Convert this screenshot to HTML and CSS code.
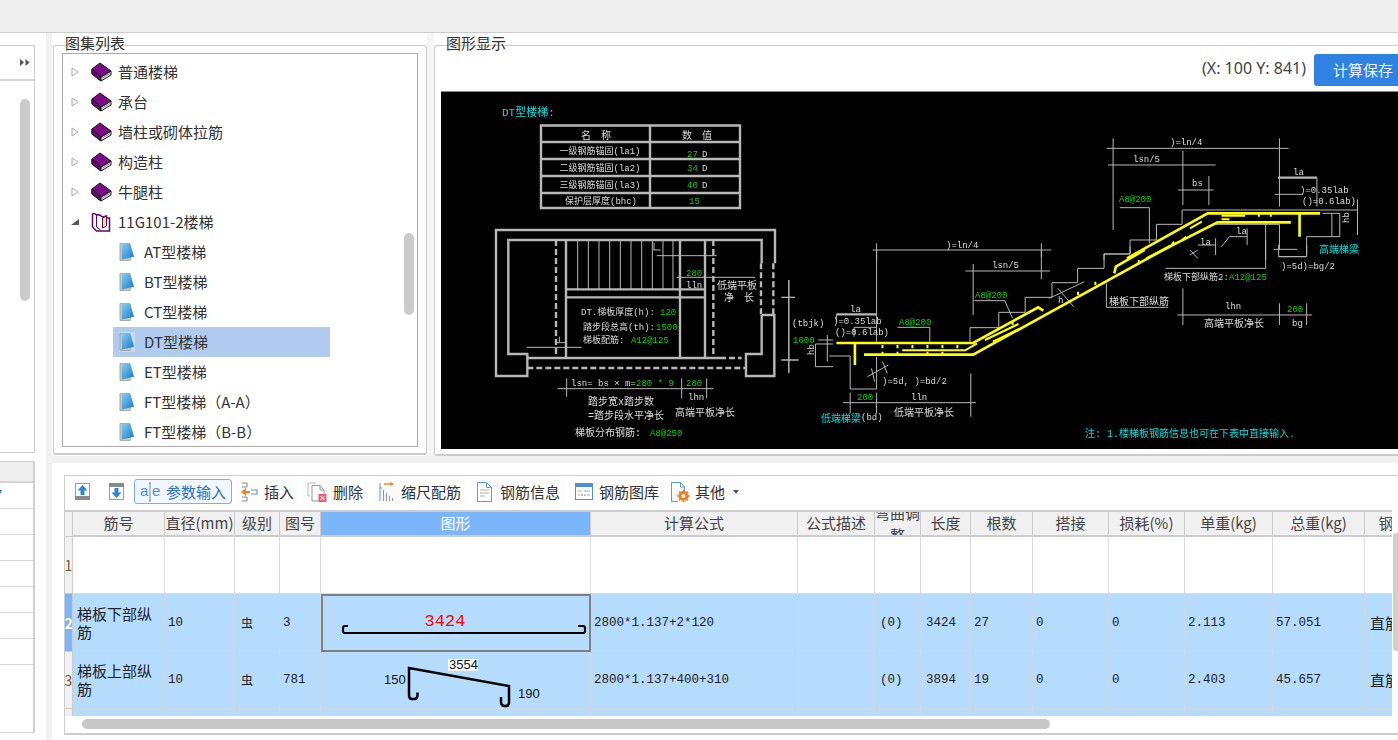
FILE: index.html
```html
<!DOCTYPE html>
<html lang="zh-CN">
<head>
<meta charset="utf-8">
<title>图集列表</title>
<link rel="stylesheet" href="styles.css">
</head>
<body>
<svg class="sprite" aria-hidden="true">
  <defs>
    <linearGradient id="docblue" x1="0" y1="0" x2="1" y2="1">
      <stop offset="0" stop-color="#86cdf0"/>
      <stop offset="1" stop-color="#1479cc"/>
    </linearGradient>
    <symbol id="i-closed" viewBox="0 0 21 20">
      <path d="M1 7V12L10 19L20 13V9L10 15Z" fill="#eee" stroke="#111"/>
      <path d="M1 7V12L10 19V15Z" fill="#6d0a78" stroke="#111"/>
      <path d="M1 7L9 1L20 9L10 15Z" fill="#7d0a86" stroke="#111"/>
      <path d="M11.500 16L19 11.500" stroke="#888" fill="none"/>
    </symbol>
    <symbol id="i-open" viewBox="0 0 20 20">
      <path d="M5 3C3 1 2 1 1 2V15L5 19H18V6H15V4L11 5C9 3 7 2 5 3Z" fill="#fff" stroke="#5a0a66" stroke-width="1.500"/>
      <path d="M11 6V16L15 14V4Z" fill="#f4e36a" stroke="#5a0a66"/>
      <path d="M5 3V15L9 18" fill="none" stroke="#5a0a66"/>
    </symbol>
    <symbol id="i-doc" viewBox="0 0 17 20">
      <path d="M1 1H11L12 6V19L1 19Z" fill="#c9c9bd" stroke="#8f8f80" stroke-width=".7"/>
      <path d="M3 1H12L16 15L3 18Z" fill="url(#docblue)"/>
    </symbol>
    <symbol id="i-up" viewBox="0 0 15 17">
      <rect x=".5" y=".5" width="14" height="16" fill="#fff" stroke="#999"/>
      <rect y="13" width="15" height="4" fill="#8a8a8a"/>
      <path d="M7.500 2L12.500 7.500H9.500V12H5.500V7.500H2.500Z" fill="#2c86d6"/>
    </symbol>
    <symbol id="i-down" viewBox="0 0 15 17">
      <rect x=".5" y=".5" width="14" height="16" fill="#fff" stroke="#999"/>
      <rect width="15" height="4" fill="#8a8a8a"/>
      <path d="M7.500 15L12.500 9.500H9.500V5H5.500V9.500H2.500Z" fill="#2c86d6"/>
    </symbol>
    <symbol id="i-insert" viewBox="0 0 17 20">
      <path d="M1 1H6V5H1M1 15H6V19H1" fill="none" stroke="#888"/>
      <path d="M10 8H16V12H10" fill="none" stroke="#5a9ad8" stroke-width="1.200"/>
      <path d="M0 10L5 6V9H9V11H5V14Z" fill="#f0851e"/>
    </symbol>
    <symbol id="i-del" viewBox="0 0 20 20">
      <path d="M5 3.500H13L17 8V12M12 19H5V3.500" fill="none" stroke="#999"/>
      <path d="M1 1H9M1 1V14H3" fill="none" stroke="#bbb"/>
      <path d="M13 3.500V8H17" fill="none" stroke="#999"/>
      <rect x="11.500" y="12" width="8" height="8" fill="#e8636b"/>
      <path d="M13.500 14L17.500 18M17.500 14L13.500 18" stroke="#fff"/>
    </symbol>
    <symbol id="i-scale" viewBox="0 0 16 20">
      <path d="M5 2H14" stroke="#f08a2c" stroke-width="1.500"/>
      <path d="M11 0L15 2L11 4Z" fill="#f08a2c"/>
      <path d="M1 1V19M1 6H3" stroke="#5a9ad8"/>
      <path d="M4.500 8V19M7.500 11V19M10.500 14V19M13.500 16V19" stroke="#999" stroke-width="1.200"/>
    </symbol>
    <symbol id="i-info" viewBox="0 0 15 20">
      <path d="M.5 .5H9.500L14.500 5.500V19.500H.5Z" fill="#fff" stroke="#5a9ad8"/>
      <path d="M9.500 .5V5.500H14.500" fill="none" stroke="#5a9ad8"/>
      <path d="M3 8H12M3 11H12M3 14H8" stroke="#aaa"/>
    </symbol>
    <symbol id="i-lib" viewBox="0 0 18 18">
      <rect x=".5" y=".5" width="17" height="16" fill="#fff" stroke="#4f8fd4"/>
      <rect width="18" height="4" fill="#4f8fd4"/>
      <path d="M3 8H7M9 8H15" stroke="#aaa"/>
      <path d="M3 12H5" stroke="#e0a030"/>
      <path d="M6 12H8" stroke="#d05050"/>
      <path d="M9 12H11" stroke="#5ab05a"/>
      <path d="M12 12H15" stroke="#aaa"/>
    </symbol>
    <symbol id="i-other" viewBox="0 0 19 20">
      <path d="M.5 .5H9.500L13.500 5V12M7 19.500H.5V.5" fill="#fff" stroke="#5a9ad8"/>
      <path d="M9.500 .5V5H13.500" fill="none" stroke="#5a9ad8"/>
      <circle cx="12.500" cy="14" r="3.500" fill="none" stroke="#f0801e" stroke-width="3"/>
      <path d="M12.500 7.500V20.500M6 14H19M8 9.500L17 18.500M17 9.500L8 18.500" stroke="#f0801e" stroke-width="1.600" stroke-dasharray="2 9"/>
    </symbol>
    <symbol id="i-tri" viewBox="0 0 8 10">
      <path d="M1 1L7 5L1 9Z" fill="#fff" stroke="#a8a8a8"/>
    </symbol>
    <symbol id="i-tri-open" viewBox="0 0 8 10">
      <path d="M0 8L8 2V8Z" fill="#555"/>
    </symbol>
    <symbol id="i-more" viewBox="0 0 10 7">
      <path d="M0 0L4 3.500L0 7ZM5.500 0L9.500 3.500L5.500 7Z" fill="#555"/>
    </symbol>
  </defs>
</svg>

<header class="topbar"></header>

<div class="main">
  <aside class="left">
    <div class="left-top">
      <div class="left-head"><svg class="more"><use href="#i-more"/></svg></div>
      <div class="left-scroll-track"><div class="left-thumb"></div></div>
    </div>
    <div class="left-table">
      <div class="left-th"></div>
      <div class="left-tr"><span class="cut">7</span></div>
      <div class="left-tr"></div>
      <div class="left-tr"></div>
      <div class="left-tr"></div>
      <div class="left-tr"></div>
      <div class="left-tr"></div>
      <div class="left-tr"></div>
    </div>
  </aside>

  <div class="right">
    <div class="upper">
      <section class="pane pane-tree">
        <div class="box box-tree">
          <span class="legend">图集列表</span>
          <div class="tree">
            <div class="node"><svg class="tri"><use href="#i-tri"/></svg><svg class="book"><use href="#i-closed"/></svg><span>普通楼梯</span></div>
            <div class="node"><svg class="tri"><use href="#i-tri"/></svg><svg class="book"><use href="#i-closed"/></svg><span>承台</span></div>
            <div class="node"><svg class="tri"><use href="#i-tri"/></svg><svg class="book"><use href="#i-closed"/></svg><span>墙柱或砌体拉筋</span></div>
            <div class="node"><svg class="tri"><use href="#i-tri"/></svg><svg class="book"><use href="#i-closed"/></svg><span>构造柱</span></div>
            <div class="node"><svg class="tri"><use href="#i-tri"/></svg><svg class="book"><use href="#i-closed"/></svg><span>牛腿柱</span></div>
            <div class="node"><svg class="tri"><use href="#i-tri-open"/></svg><svg class="book"><use href="#i-open"/></svg><span>11G101-2楼梯</span></div>
            <div class="leaf"><svg class="doc"><use href="#i-doc"/></svg><span>AT型楼梯</span></div>
            <div class="leaf"><svg class="doc"><use href="#i-doc"/></svg><span>BT型楼梯</span></div>
            <div class="leaf"><svg class="doc"><use href="#i-doc"/></svg><span>CT型楼梯</span></div>
            <div class="leaf selected"><svg class="doc"><use href="#i-doc"/></svg><span>DT型楼梯</span></div>
            <div class="leaf"><svg class="doc"><use href="#i-doc"/></svg><span>ET型楼梯</span></div>
            <div class="leaf"><svg class="doc"><use href="#i-doc"/></svg><span>FT型楼梯（A-A）</span></div>
            <div class="leaf"><svg class="doc"><use href="#i-doc"/></svg><span>FT型楼梯（B-B）</span></div>
          </div>
          <div class="tree-thumb"></div>
        </div>
      </section>

      <section class="pane pane-view">
        <div class="box box-view">
          <span class="legend">图形显示</span>
          <div class="view-head">
            <span class="coords">(X: 100 Y: 841)</span>
            <button class="save">计算保存</button>
          </div>
          <div class="canvas">
            <svg class="cad" viewBox="441 92 957 358" width="957" height="358">
              <!-- parameter table -->
              <path class="lw2" d="M541 125.500H740V208H541ZM541 142H740M541 159H740M541 176H740M541 193H740M650 125.500V208"/>
              <!-- plan view, coordinates in 3x -->
              <g transform="translate(440 220) scale(.33333)">
                <path class="lw2" d="M1005 130V30H168V468H262V402H205V60H965V130M965 285H1003V468H918V402H965V285"/>
                <path class="lw2 dash" d="M963 130V285M1000 130V285"/>
                <path class="lw2" d="M262 414H840M378 60V414M795 60V414M720 60V414M378 208H795M378 232H795"/>
                <path class="lw2 dash" d="M840 414H905M262 444H915M348 60V414M820 60V414"/>
                <path class="lw1" d="M413 60V208M445 60V208M477 60V208M509 60V208M541 60V208M573 60V208M605 60V208M637 60V208M669 60V208M699 60V208"/>
                <path class="lw1" d="M640 90H662M642 68V90M650 107H830M710 172H945M260 382H425M350 368H375M358 350V368"/>
                <path class="lw1" d="M352 506H820M380 475V530M725 475V535M800 475V535"/>
                <path class="lw1" d="M1047 180V460M1025 232H1065M1025 420H1075"/>
              </g>
              <!-- section, upper part, coordinates read from crop -->
              <g transform="translate(780 40) scale(.3942 .33333)">
                <path class="lw1" d="M828 325H1290M845 295V570M1267 295V500M832 375H1105M1022 332V495M1010 450H1100M1088 408V495"/>
                <path class="lw2" d="M1263 413H1362"/>
                <path class="lw1" d="M1362 413V500M1255 463H1325"/>
                <path class="lw1" d="M888 640V600H955V553H1020V510H1465M1465 478V585M822 660V642H888"/>
                <path class="lw1" d="M862 503H937V610M1105 553H1267V628M1232 553V660"/>
                <path class="lw1" d="M1376 520H1420V590H1336V645M1400 520V590M1252 628H1312M1265 650H1335M1120 620L1140 590H1185M1185 565V615M1040 630L1060 655M1060 615H1105M1105 595V645"/>
                <path class="lw1" d="M235 630H688M245 610V660M663 610V650"/>
                <path class="yl" d="M1370 520H1085L880 655M1296 547H1110L930 655M1318 522V590"/>
                <path class="yl yl-thin" d="M1120 527H1180M1215 520V530M1245 520V530M1120 538H1140M1070 545L1040 565M1000 605L990 620M1030 590L1020 600"/>
              </g>
              <!-- section, lower part -->
              <g transform="translate(780 250) scale(.3942 .33333)">
                <path class="lw1" d="M245 0V275M663 0V88M470 63H685M490 42V195"/>
                <path class="lw1" d="M482 275V233H555V187H622V142H690V98H755V55H822V12H888V-10"/>
                <path class="lw1" d="M493 152H570L590 205M298 232H380V275"/>
                <path class="lw2" d="M143 193H245"/>
                <path class="lw1" d="M143 193V215M188 232H245M188 232V260M22 90V368M3 142H38M3 330H48"/>
                <path class="lw1" d="M97 270H135M90 282H135M90 282V350H135M120 255V335M125 318H178V417H245V320"/>
                <path class="lw1" d="M222 380L275 345M232 355L240 395M260 335L272 370M160 458H497M178 428V490M245 428V490M484 370V500"/>
                <path class="lw1" d="M683 145L772 95M705 115L745 170M828 100V172H985M978 55H1232V-30M1008 195H1350M1022 115V225M1267 160V225M1336 160V225"/>
                <path class="lw1" d="M1265 -15V20H1336V-15M1040 15L1060 0"/>
                <path class="yl" d="M143 279H490L655 172L668 182M190 279V345M213 314H490L990 -12M848 70L852 50L925 0"/>
                <path class="yl yl-thin" d="M310 301H470L500 280M520 270L605 222M540 275L610 235"/>
                <path class="yl yl-thin" d="M260 285V295M298 285V295M336 285V295M374 285V295M412 285V295M450 285V295M260 305V314M298 305V314M374 305V314M412 305V314M590 215V225M800 95V105M756 125V135M910 30V40"/>
              </g>
              <!-- labels -->
              <text class="t c big" x="502" y="116">DT型楼梯:</text>
              <text class="t mid" x="596" y="139" text-anchor="middle">名　称</text>
              <text class="t mid" x="697" y="139" text-anchor="middle">数　值</text>
              <text class="t" x="600" y="154" text-anchor="middle">一级钢筋锚固(la1)</text>
              <text class="t" x="600" y="171" text-anchor="middle">二级钢筋锚固(la2)</text>
              <text class="t" x="600" y="188" text-anchor="middle">三级钢筋锚固(la3)</text>
              <text class="t" x="601" y="204" text-anchor="middle">保护层厚度(bhc)</text>
              <text class="t g" x="687" y="157">27</text><text class="t" x="702" y="157">D</text>
              <text class="t g" x="687" y="171">34</text><text class="t" x="702" y="171">D</text>
              <text class="t g" x="687" y="188">40</text><text class="t" x="702" y="188">D</text>
              <text class="t g" x="689" y="204">15</text>

              <text class="t g" x="686" y="276">280</text>
              <text class="t" x="686" y="288">lln</text>
              <text class="t mid" x="717" y="289">低端平板</text>
              <text class="t mid" x="724" y="301">净　长</text>
              <text class="t" x="581" y="315">DT.梯板厚度(h):</text><text class="t g" x="660" y="315">120</text>
              <text class="t" x="583" y="330">踏步段总高(th):</text><text class="t g" x="656" y="330">1500</text>
              <text class="t" x="583" y="343">梯板配筋:</text><text class="t g" x="631" y="343">A12@125</text>
              <text class="t" x="571" y="386">lsn= bs × m=</text><text class="t g" x="636" y="386">280 * 9</text>
              <text class="t g" x="686" y="386">280</text>
              <text class="t" x="688" y="400">lhn</text>
              <text class="t mid" x="588" y="405">踏步宽x踏步数</text>
              <text class="t mid" x="588" y="419">=踏步段水平净长</text>
              <text class="t mid" x="675" y="416">高端平板净长</text>
              <text class="t mid" x="575" y="436">梯板分布钢筋:</text>
              <text class="t g" x="650" y="436">A8@250</text>
              <text class="t" x="792" y="326">(tbjk)</text>
              <text class="t g" x="793" y="343">1600</text>
              <text class="t" x="811" y="358" transform="rotate(-90 811 355)">hb</text>

              <text class="t" x="946" y="248">)=ln/4</text>
              <text class="t" x="992" y="268">lsn/5</text>
              <text class="t g" x="975" y="298">A8@200</text>
              <text class="t g" x="899" y="325">A8@200</text>
              <text class="t" x="850" y="312">la</text>
              <text class="t" x="833" y="324">)=0.35lab</text>
              <text class="t" x="835" y="335">()=0.6lab)</text>
              <text class="t" x="882" y="384">)=5d, )=bd/2</text>
              <text class="t g" x="857" y="400">200</text>
              <text class="t" x="911" y="400">lln</text>
              <text class="t c mid" x="821" y="422">低端梯梁</text>
              <text class="t" x="861" y="420">(bd)</text>
              <text class="t mid" x="894" y="416">低端平板净长</text>
              <text class="t" x="1058" y="303">h</text>
              <text class="t mid" x="1109" y="305">梯板下部纵筋</text>
              <text class="t" x="1164" y="280">梯板下部纵筋2:</text>
              <text class="t g" x="1229" y="280">A12@125</text>
              <text class="t" x="1281" y="269">)=5d)=bg/2</text>
              <text class="t" x="1225" y="309">lhn</text>
              <text class="t g" x="1287" y="312">200</text>
              <text class="t mid" x="1204" y="327">高端平板净长</text>
              <text class="t" x="1292" y="326">bg</text>
              <text class="t c mid" x="1085" y="437">注: 1.楼梯板钢筋信息也可在下表中直接输入.</text>

              <text class="t" x="1170" y="145">)=ln/4</text>
              <text class="t" x="1133" y="162">lsn/5</text>
              <text class="t" x="1192" y="186">bs</text>
              <text class="t" x="1293" y="175">la</text>
              <text class="t" x="1300" y="193">)=0.35lab</text>
              <text class="t" x="1302" y="204">()=0.6lab)</text>
              <text class="t g" x="1119" y="202">A8@200</text>
              <text class="t c mid" x="1319" y="253">高端梯梁</text>
              <text class="t" x="1236" y="234">la</text>
              <text class="t" x="1200" y="245">la</text>
              <text class="t" x="1346" y="226" transform="rotate(-90 1346 223)">hb</text>
            </svg>
          </div>
        </div>
      </section>
    </div>

    <div class="lower">
      <section class="grid-panel">
        <div class="toolbar">
          <span class="tb"><svg class="ic15"><use href="#i-up"/></svg></span>
          <span class="tb tb-down"><svg class="ic15"><use href="#i-down"/></svg></span>
          <span class="tb tb-active">
            <svg class="ic20" viewBox="0 0 20 20"><text class="ae" x="0" y="14">a</text><text class="ae" x="12" y="14">e</text><path d="M9 1H11M10 1V19M9 19H11" stroke="#888" fill="none"/></svg>
            <span>参数输入</span>
          </span>
          <span class="tb tb-insert"><svg class="ic17"><use href="#i-insert"/></svg><span>插入</span></span>
          <span class="tb tb-del"><svg class="ic20"><use href="#i-del"/></svg><span>删除</span></span>
          <span class="tb tb-plus"><svg class="ic16"><use href="#i-scale"/></svg><span>缩尺配筋</span></span>
          <span class="tb tb-plus"><svg class="ic15b"><use href="#i-info"/></svg><span>钢筋信息</span></span>
          <span class="tb"><svg class="ic18"><use href="#i-lib"/></svg><span>钢筋图库</span></span>
          <span class="tb tb-other"><svg class="ic19"><use href="#i-other"/></svg><span>其他</span><span class="caret"></span></span>
        </div>

        <div class="table-wrap">
          <div class="row head">
            <div class="rh"></div>
            <div class="c">筋号</div><div class="c">直径(mm)</div><div class="c">级别</div><div class="c">图号</div>
            <div class="c active">图形</div>
            <div class="c">计算公式</div><div class="c">公式描述</div><div class="c wrap">弯曲调整</div>
            <div class="c">长度</div><div class="c">根数</div><div class="c">搭接</div><div class="c">损耗(%)</div>
            <div class="c">单重(kg)</div><div class="c">总重(kg)</div><div class="c">钢筋归类</div>
          </div>
          <div class="row r57">
            <div class="rh">1</div>
            <div class="c"></div><div class="c"></div><div class="c"></div><div class="c"></div><div class="c"></div><div class="c"></div><div class="c"></div><div class="c"></div><div class="c"></div><div class="c"></div><div class="c"></div><div class="c"></div><div class="c"></div><div class="c"></div><div class="c"></div>
          </div>
          <div class="row r58 sel">
            <div class="rh on">2</div>
            <div class="c name">梯板下部纵筋</div><div class="c n">10</div><div class="c grade">虫</div><div class="c n">3</div>
            <div class="c shape focus">
              <svg class="bar" viewBox="0 0 268 54" width="268" height="54">
                <path d="M25 30H22Q20 30 20 32V35Q20 37 22 37H260Q262 37 262 35V32Q262 30 260 30H255" fill="none" stroke="#000" stroke-width="2.200"/>
                <text class="len" x="122" y="30" text-anchor="middle">3424</text>
              </svg>
            </div>
            <div class="c n">2800*1.137+2*120</div><div class="c"></div>
            <div class="c n wide">(0)</div><div class="c n wide">3424</div><div class="c n">27</div><div class="c n">0</div><div class="c n">0</div>
            <div class="c n">2.113</div><div class="c n">57.051</div><div class="c txt">直筋</div>
          </div>
          <div class="row r57 sel">
            <div class="rh">3</div>
            <div class="c name">梯板上部纵筋</div><div class="c n">10</div><div class="c grade">虫</div><div class="c n">781</div>
            <div class="c shape">
              <svg class="bar" viewBox="0 0 270 57" width="270" height="57">
                <path d="M96.500 40.500V43Q96.500 47 93 47H91Q88 47 88 43V16L188 34V51Q188 54 184 54Q180 54 180 50V45" fill="none" stroke="#000" stroke-width="2.500"/>
                <rect class="lbl-bg" x="127" y="7" width="30" height="12"/>
                <text class="dim" x="128" y="17">3554</text>
                <text class="dim" x="63" y="32">150</text>
                <text class="dim" x="197" y="46">190</text>
              </svg>
            </div>
            <div class="c n">2800*1.137+400+310</div><div class="c"></div>
            <div class="c n wide">(0)</div><div class="c n wide">3894</div><div class="c n">19</div><div class="c n">0</div><div class="c n">0</div>
            <div class="c n">2.403</div><div class="c n">45.657</div><div class="c txt">直筋</div>
          </div>
          <div class="row r57 sel">
            <div class="rh"></div>
            <div class="c"></div><div class="c"></div><div class="c"></div><div class="c"></div><div class="c"></div><div class="c"></div><div class="c"></div><div class="c"></div><div class="c"></div><div class="c"></div><div class="c"></div><div class="c"></div><div class="c"></div><div class="c"></div><div class="c"></div>
          </div>
        </div>
        <div class="hscroll"><div class="hthumb"></div></div>
        <div class="vthumb"></div>
      </section>
    </div>
  </div>
</div>
</body>
</html>
```
FILE: styles.css
```css
* { box-sizing: border-box; }
html, body { margin: 0; padding: 0; }
body {
  width: 1398px;
  height: 740px;
  overflow: hidden;
  background: #fff;
  color: #333;
  font: 15px/20px "Noto Sans CJK SC", "Noto Sans", sans-serif;
}
.sprite { position: absolute; width: 0; height: 0; }

.topbar { height: 33px; background: #efefef; border-bottom: 1px solid #ccc; }
.main { display: flex; height: 707px; }

/* left strip */
.left { width: 46px; padding: 12px 11px 7px 0; background: #fff; display: flex; flex-direction: column; }
.left-top { height: 408px; border: 1px solid #ccc; border-left: 0; display: flex; flex-direction: column; }
.left-head { height: 35px; border-bottom: 2px solid #d4d4d4; display: flex; justify-content: flex-end; align-items: center; padding-right: 4px; }
.more { width: 10px; height: 7px; }
.left-scroll-track { flex: 1; padding: 18px 4px 0 20px; }
.left-thumb { width: 10px; height: 202px; background: #cbcbcb; border-radius: 5px; }
.left-table { margin-top: 8px; flex: 1; border: 1px solid #d0d0d0; border-left: 0; border-right-width: 2px; }
.left-th { height: 21px; background: #efefef; border-bottom: 2px solid #d4d4d4; }
.left-tr { height: 26px; border-bottom: 1px solid #d4d4d4; overflow: hidden; }
.cut { display: block; margin-left: -5px; font: 13px/24px "Liberation Sans", sans-serif; color: #2b6cb0; }

/* right side */
.right { flex: 1; min-width: 0; background: #f1f1f1; padding-left: 6px; display: flex; flex-direction: column; }
.upper { height: 423px; display: flex; gap: 7px; background: #f5f5f5; }
.pane { background: #fff; padding-top: 12px; }
.pane-tree { width: 375px; padding-left: 1px; }
.pane-view { flex: 1; min-width: 0; }
.box { position: relative; height: 411px; border: 1px solid #ccc; border-bottom-width: 2px; border-radius: 3px; background: #fff; }
.box-tree { padding: 7px 8px; height: 410px; }
.box-view { border-right: 0; border-radius: 3px 0 0 3px; padding-left: 6px; }
.legend { position: absolute; left: 11px; top: -13px; color: #333; white-space: nowrap; }

.tree { height: 394px; border: 1px solid #aaa; padding-top: 3px; overflow: hidden; }
.node, .leaf { height: 30px; display: flex; align-items: center; white-space: nowrap; }
.node { padding-left: 8px; }
.tri { width: 8px; height: 10px; flex: none; }
.book { width: 21px; height: 20px; flex: none; margin: 0 6px 0 12px; }
.leaf { margin-left: 50px; width: 217px; padding-left: 6px; gap: 9px; }
.doc { width: 16px; height: 20px; flex: none; }
.selected { background: #b0cbee; }
.selected .doc { background: #c7daf3; }
.tree-thumb { position: absolute; left: 350px; top: 187px; width: 10px; height: 82px; background: #cbcbcb; border-radius: 5px; }

.view-head { height: 46px; display: flex; justify-content: flex-end; align-items: center; padding-top: 2px; }
.coords { font-family: "Noto Sans", sans-serif; font-size: 16px; color: #444; margin: 0 8px 4px 0; }
.save { width: 84px; height: 32px; padding: 0 0 0 19px; border: 0; border-radius: 3px 0 0 3px; background: #2f81e2; color: #e8f1fc; font: inherit; text-align: left; white-space: nowrap; overflow: hidden; }
.canvas { height: 358px; background: #000; border-top: 1px solid #888; margin-top: -1px; }
.cad { display: block; filter: blur(.45px); }
.cad path { fill: none; vector-effect: non-scaling-stroke; }
.lw1 { stroke: #b8b8b8; stroke-width: 1; }
.lw2 { stroke: #b8b8b8; stroke-width: 2.400; }
.dash { stroke-dasharray: 6 3; }
.yl { stroke: #ffff00; stroke-width: 2.600; }
.yl-thin { stroke-width: 2; }
.t { font: 9px "Liberation Mono", "Noto Sans CJK SC", monospace; fill: #ddd; }
.mid { font-size: 10px; }
.big { font-size: 11px; }
.g { fill: #00d800; }
.t.c { fill: #00e0e0; }

/* lower grid */
.lower { flex: 1; background: #fff; margin-top: 7px; padding: 12px 0 5px 12px; }
.grid-panel { position: relative; height: 260px; border: 1px solid #ccc; border-right: 0; border-bottom-width: 2px; }
.toolbar { height: 34px; display: flex; align-items: center; gap: 5px; padding: 0 0 3px 5px; white-space: nowrap; }
.tb { display: flex; align-items: center; height: 25px; padding: 0 5px; gap: 6px; background: #fcfcfc; border-radius: 3px; }
.tb-down { margin-left: 4px; }
.tb-active { background: #f0f7ff; border: 1px solid #74b1f5; color: #2c6fc2; }
.tb-insert { margin-left: -1px; }
.tb-del { margin-left: -2px; }
.tb-plus { margin-left: 1px; }
.tb-other { margin-left: -3px; }
.ic15 { width: 15px; height: 17px; }
.ic15b { width: 15px; height: 20px; margin-right: 2px; }
.ic16 { width: 16px; height: 20px; }
.ic17 { width: 17px; height: 20px; }
.ic18 { width: 18px; height: 18px; }
.ic19 { width: 19px; height: 20px; margin-right: -1px; }
.ic20 { width: 20px; height: 20px; }
.ae { font: 15px "Liberation Sans", sans-serif; fill: #4a90d9; }
.caret { margin-left: 2px; width: 0; height: 0; border: 3.500px solid transparent; border-top: 4px solid #555; border-bottom: 0; }

.table-wrap { height: 206px; width: 1327px; overflow: hidden; border-top: 2px solid #ccc; }
.row { display: grid; width: 1388px; grid-template-columns: 8px 92px 70px 45px 41px 270px 207px 77px 46px 50px 62px 76px 76px 88px 92px 88px; }
.r57 { height: 57px; }
.r58 { height: 58px; }
.head { height: 25px; background: #f0f0f0; }
.rh { background: #f0f0f0; border-right: 1px solid #ccc; border-bottom: 1px solid #ccc; font-size: 14px; display: flex; align-items: center; justify-content: center; overflow: hidden; color: #7a5a30; }
.rh.on { background: #7ab6f9; color: #fff; font-weight: 700; }
.c { border-right: 1px solid #ddd; border-bottom: 1px solid #ddd; display: flex; align-items: center; padding: 0 3px; overflow: hidden; min-width: 0; }
.name { padding: 0 4px; line-height: 18px; }
.head .c { justify-content: center; padding: 0 0 2px; white-space: nowrap; border-right-color: #ccc; border-bottom: 2px solid #ccc; color: #444; }
.head .wrap { white-space: normal; text-align: center; line-height: 22px; padding: 0; }
.head .active { background: #7ab6f9; color: #fff; }
.sel { background: #b5dcfd; }
.sel .rh { background: #f0f0f0; }
.sel .rh.on { background: #7ab6f9; }
.sel .c { border-color: #cfd8e0; color: #222; }
.n { font: 12.500px "Liberation Mono", monospace; color: #222; white-space: nowrap; }
.wide { padding-left: 5px; }
.grade { font-size: 12px; padding-left: 6px; }
.txt { white-space: nowrap; padding-left: 5px; }
.shape { padding: 0; }
.focus { border: 2px solid #808080 !important; }
.bar { display: block; flex: none; }
.len { font: 17px "Liberation Mono", monospace; fill: #f00; }
.dim { font: 13px "Liberation Sans", sans-serif; fill: #111; }
.lbl-bg { fill: #fff; }

.hscroll { height: 18px; padding: 3px 0 0 17px; }
.hthumb { width: 968px; height: 10px; border-radius: 5px; background: #c8c8c8; }
.vthumb { position: absolute; left: 1328px; top: 57px; width: 5px; height: 118px; border-radius: 3px 0 0 3px; background: #cfcfcf; }
```
